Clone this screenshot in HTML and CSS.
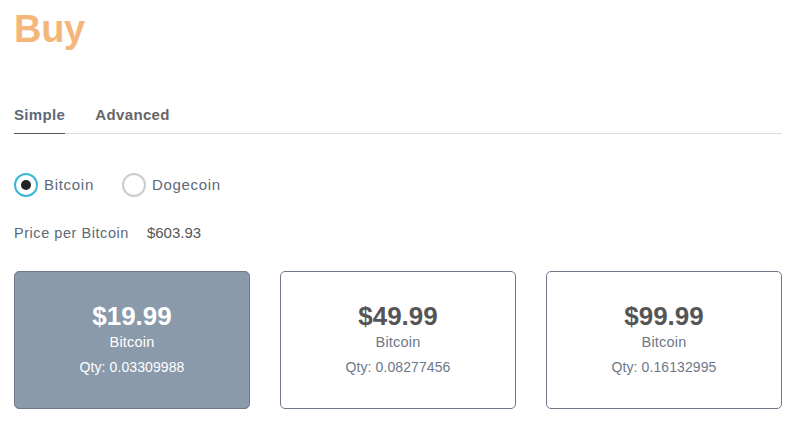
FILE: index.html
```html
<!DOCTYPE html>
<html lang="en">
<head>
<meta charset="utf-8">
<title>Buy</title>
<link rel="stylesheet" href="styles.css">
</head>
<body>
<main class="page">
  <h1 class="title">Buy</h1>
  <nav class="tabs">
    <span class="tab tab-active">Simple</span>
    <span class="tab">Advanced</span>
  </nav>
  <div class="radios">
    <label class="radio">
      <span class="radio-circle radio-checked"><span class="radio-dot"></span></span>
      <span class="radio-label">Bitcoin</span>
    </label>
    <label class="radio">
      <span class="radio-circle"></span>
      <span class="radio-label">Dogecoin</span>
    </label>
  </div>
  <div class="price-row">
    <span class="price-label">Price per Bitcoin</span>
    <span class="price-value">$603.93</span>
  </div>
  <div class="cards">
    <div class="card card-selected">
      <div class="card-price">$19.99</div>
      <div class="card-coin">Bitcoin</div>
      <div class="card-qty">Qty: 0.03309988</div>
    </div>
    <div class="card">
      <div class="card-price">$49.99</div>
      <div class="card-coin">Bitcoin</div>
      <div class="card-qty">Qty: 0.08277456</div>
    </div>
    <div class="card">
      <div class="card-price">$99.99</div>
      <div class="card-coin">Bitcoin</div>
      <div class="card-qty">Qty: 0.16132995</div>
    </div>
  </div>
</main>
</body>
</html>
```

FILE: styles.css
```css
* { box-sizing: border-box; }

html, body {
  margin: 0;
  padding: 0;
  background: #ffffff;
}

body {
  font-family: "Liberation Sans", Arial, Helvetica, sans-serif;
  color: #5d6977;
}

.page {
  width: 768px;
  margin-left: 14px;
}

.title {
  margin: 10px 0 0 0;
  font-size: 38px;
  line-height: 38px;
  font-weight: bold;
  color: #f4b67b;
  letter-spacing: -0.3px;
}

.tabs {
  margin-top: 57px;
  display: flex;
  gap: 30px;
  border-bottom: 1px solid #dddddd;
}

.tab {
  font-size: 15px;
  line-height: 20px;
  font-weight: bold;
  color: #666666;
  letter-spacing: 0.35px;
  padding-bottom: 8px;
  margin-bottom: -1px;
  border-bottom: 1px solid transparent;
}

.tab-active {
  color: #5d6977;
  border-bottom-color: #555555;
}

.radios {
  margin-top: 39px;
  display: flex;
  gap: 28px;
  height: 24px;
}

.radio {
  display: flex;
  align-items: center;
  gap: 6px;
}

.radio-circle {
  width: 24px;
  height: 24px;
  border-radius: 50%;
  border: 2px solid #cccccc;
  display: flex;
  align-items: center;
  justify-content: center;
}

.radio-checked {
  border-color: #3cb6d5;
}

.radio-dot {
  width: 10px;
  height: 10px;
  border-radius: 50%;
  background: #222222;
}

.radio-label {
  font-size: 15px;
  line-height: 20px;
  color: #5d6977;
  letter-spacing: 0.7px;
}

.price-row {
  margin-top: 26px;
  display: flex;
  gap: 18px;
  font-size: 14px;
  line-height: 20px;
}

.price-label {
  color: #5d6977;
  letter-spacing: 0.55px;
  font-size: 14.5px;
}

.price-value {
  color: #555555;
  font-size: 15px;
}

.cards {
  margin-top: 28px;
  display: grid;
  grid-template-columns: repeat(3, 1fr);
  gap: 30px;
}

.card {
  border: 1px solid #6e7886;
  border-radius: 5px;
  padding: 29px 8px 27px;
  text-align: center;
  background: #ffffff;
}

.card-selected {
  background: #8a9aaa;
}

.card-price {
  font-size: 26px;
  line-height: 30px;
  font-weight: bold;
  color: #555555;
  letter-spacing: 0px;
}

.card-coin {
  font-size: 14.5px;
  line-height: 22px;
  color: #6d7887;
  letter-spacing: 0.2px;
}

.card-qty {
  font-size: 14px;
  line-height: 28px;
  color: #6d7887;
  letter-spacing: 0.1px;
}

.card-selected .card-price,
.card-selected .card-coin,
.card-selected .card-qty {
  color: #ffffff;
}
```
